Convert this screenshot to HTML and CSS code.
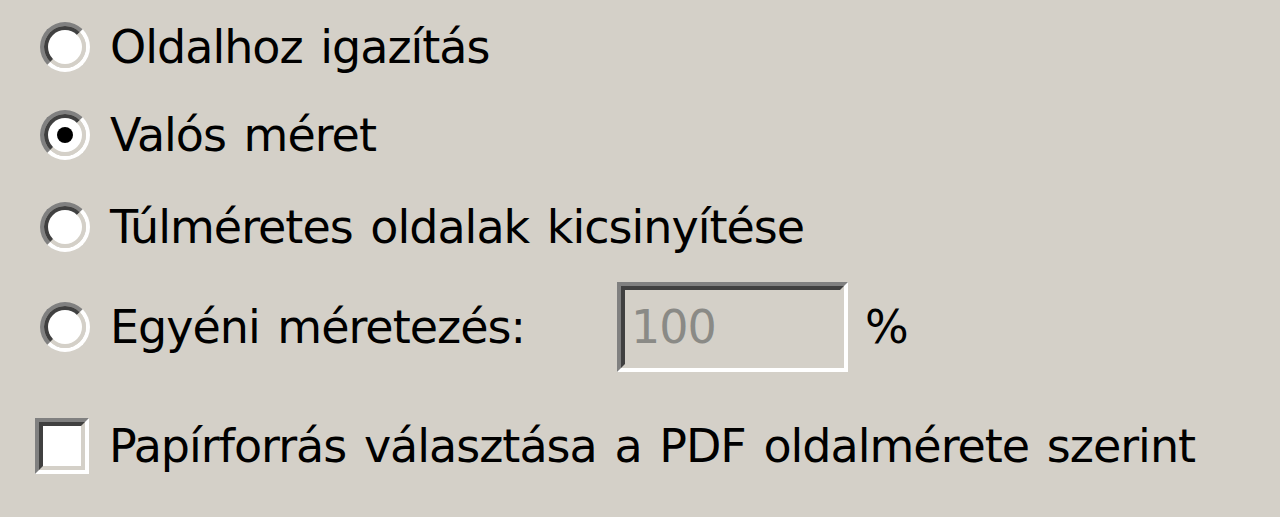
FILE: index.html
```html
<!DOCTYPE html>
<html lang="hu">
<head>
  <meta charset="UTF-8" />
  <title>Oldalméretezés</title>
  <link rel="stylesheet" href="styles.css">
</head>
<body>
  <div class="options">
    <div class="row row-1">
      <span class="radio"><span class="radio-inner"></span></span>
      <span class="label">Oldalhoz igazítás</span>
    </div>
    <div class="row row-2">
      <span class="radio"><span class="radio-inner"><span class="dot"></span></span></span>
      <span class="label">Valós méret</span>
    </div>
    <div class="row row-3">
      <span class="radio"><span class="radio-inner"></span></span>
      <span class="label">Túlméretes oldalak kicsinyítése</span>
    </div>
    <div class="row row-4">
      <span class="radio"><span class="radio-inner"></span></span>
      <span class="label label-fixed">Egyéni méretezés:</span>
      <span class="textbox"><span class="textbox-inner">100</span></span>
      <span class="label percent">%</span>
    </div>
    <div class="row row-5">
      <span class="checkbox"><span class="checkbox-inner"></span></span>
      <span class="label">Papírforrás választása a PDF oldalmérete szerint</span>
    </div>
  </div>
</body>
</html>
```

FILE: styles.css
```css
html, body {
  margin: 0;
  height: 100%;
}
body {
  background-color: #d4d0c8;
  font-family: "DejaVu Sans", Tahoma, sans-serif;
  color: #000;
  overflow: hidden;
}
.options {
  padding-left: 40px;
}
.row {
  display: flex;
  align-items: center;
  height: 60px;
}
.row-1 { margin-top: 17px; }
.row-2 { margin-top: 28px; }
.row-3 { margin-top: 32px; }
.row-4 { margin-top: 25px; height: 90px; }
.row-5 { margin-top: 44px; }

.label {
  font-size: 46px;
  letter-spacing: -1px;
  word-spacing: 4px;
  margin-left: 20px;
  white-space: nowrap;
}
.label-fixed {
  width: 507px;
}
.percent {
  margin-left: 17px;
}

.radio {
  width: 50px;
  height: 50px;
  box-sizing: border-box;
  border-radius: 50%;
  border: 4px solid;
  border-color: #808080 #fff #fff #808080;
  flex: none;
}
.radio-inner {
  display: flex;
  align-items: center;
  justify-content: center;
  width: 100%;
  height: 100%;
  box-sizing: border-box;
  border-radius: 50%;
  border: 4px solid;
  border-color: #404040 #d4d0c8 #d4d0c8 #404040;
  background: #fff;
}
.dot {
  width: 16px;
  height: 16px;
  border-radius: 50%;
  background: #000;
}

.checkbox {
  width: 54px;
  height: 56px;
  margin-left: -5px;
  box-sizing: border-box;
  border: 4px solid;
  border-color: #808080 #fff #fff #808080;
  flex: none;
}
.checkbox-inner {
  display: block;
  height: 100%;
  box-sizing: border-box;
  border: 4px solid;
  border-color: #404040 #d4d0c8 #d4d0c8 #404040;
  background: #fff;
}

.textbox {
  width: 231px;
  height: 90px;
  box-sizing: border-box;
  border: 4px solid;
  border-color: #808080 #fff #fff #808080;
  flex: none;
}
.textbox-inner {
  display: flex;
  align-items: center;
  height: 100%;
  box-sizing: border-box;
  border: 4px solid;
  border-color: #404040 #d4d0c8 #d4d0c8 #404040;
  padding-left: 6px;
  font-size: 46px;
  letter-spacing: -1px;
  color: #8a8a86;
}
```
